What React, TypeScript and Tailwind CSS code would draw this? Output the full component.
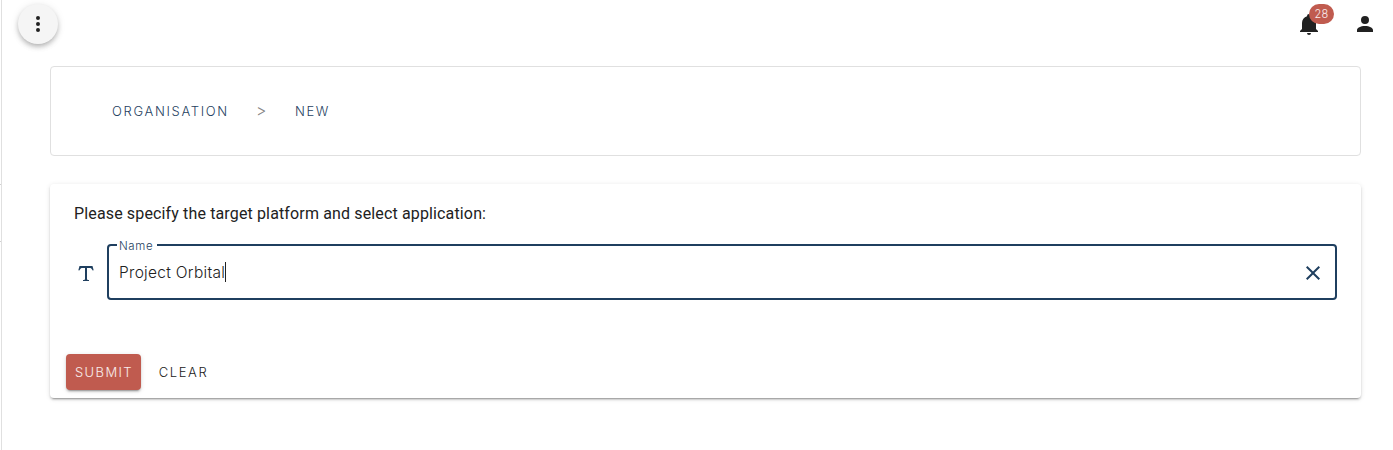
import React from "react";

const icons = {
  dots: "M12,16A2,2 0 0,1 14,18A2,2 0 0,1 12,20A2,2 0 0,1 10,18A2,2 0 0,1 12,16M12,10A2,2 0 0,1 14,12A2,2 0 0,1 12,14A2,2 0 0,1 10,12A2,2 0 0,1 12,10M12,4A2,2 0 0,1 14,6A2,2 0 0,1 12,8A2,2 0 0,1 10,6A2,2 0 0,1 12,4Z",
  bell: "M21,19V20H3V19L5,17V11C5,7.9 7.03,5.17 10,4.29C10,4.19 10,4.1 10,4A2,2 0 0,1 12,2A2,2 0 0,1 14,4C14,4.1 14,4.19 14,4.29C16.97,5.17 19,7.9 19,11V17L21,19M14,21A2,2 0 0,1 12,23A2,2 0 0,1 10,21",
  account: "M12,4A4,4 0 0,1 16,8A4,4 0 0,1 12,12A4,4 0 0,1 8,8A4,4 0 0,1 12,4M12,14C16.42,14 20,15.79 20,18V20H4V18C4,15.79 7.58,14 12,14Z",
  text: "M18.5,4L19.66,8.35L18.7,8.61C18.25,7.74 17.79,6.87 17.26,6.43C16.73,6 16.11,6 15.5,6H13V16.5C13,17 13,17.5 13.33,17.75C13.67,18 14.33,18 15,18V19H9V18C9.67,18 10.33,18 10.67,17.75C11,17.5 11,17 11,16.5V6H8.5C7.89,6 7.27,6 6.74,6.43C6.21,6.87 5.75,7.74 5.3,8.61L4.34,8.35L5.5,4H18.5Z",
  close: "M19,6.41L17.59,5L12,10.59L6.41,5L5,6.41L10.59,12L5,17.59L6.41,19L12,13.41L17.59,19L19,17.59L13.41,12L19,6.41Z",
};

function Icon({ name, className = "" }: { name: keyof typeof icons; className?: string }) {
  return (
    <svg viewBox="0 0 24 24" className={`size-6 shrink-0 fill-current ${className}`} aria-hidden="true">
      <path d={icons[name]} />
    </svg>
  );
}

export default function App() {
  return (
    <div className="flex h-[450px] w-full overflow-hidden bg-white font-['Inter',sans-serif] font-light text-[#212121]">
      <aside className="flex w-0.5 shrink-0 flex-col border-r border-[#e0e0e0] pt-[184px]">
        <div className="h-px bg-[#d0d0d0]" />
        <div className="mt-14 h-px bg-[#d0d0d0]" />
      </aside>
      <div className="flex min-w-0 flex-1 flex-col">
        <header className="flex h-[66px] items-start pl-4 pr-4">
          <button className="mt-1 flex size-10 items-center justify-center rounded-full bg-[#f5f5f5] shadow-[0_3px_5px_-1px_rgba(0,0,0,0.2),0_3px_6px_0_rgba(0,0,0,0.1),0_1px_10px_0_rgba(0,0,0,0.08)]" aria-label="Menu">
            <Icon name="dots" />
          </button>
          <div className="ml-auto mt-3 flex gap-8">
            <div className="relative size-6">
              <Icon name="bell" />
              <span className="absolute left-3 -top-2 flex h-5 w-[25px] items-center justify-center rounded-[10px] bg-[#c05b4f] text-[11px] leading-none tracking-[0.2px] text-white/90">28</span>
            </div>
            <Icon name="account" />
          </div>
        </header>
        <main className="flex flex-col gap-7 pl-12 pr-8">
          <nav className="flex h-[90px] items-center rounded border border-[#e0e0e0] pl-[61px] text-[13px] text-[#1f3f5f]">
            <span className="w-[144px] pt-0.5 tracking-[1.67px]">ORGANISATION</span>
            <span className="w-[38px] pb-0.5 text-base text-[#858585]">&gt;</span>
            <span className="pl-px pt-0.5 tracking-[1.6px]">NEW</span>
          </nav>
          <section className="flex h-[214px] flex-col rounded bg-white shadow-[0_3px_1px_-2px_rgba(0,0,0,0.2),0_2px_2px_0_rgba(0,0,0,0.14),0_1px_5px_0_rgba(0,0,0,0.12)]">
            <p className="mt-[18px] pl-6 font-['Roboto',sans-serif] text-base font-normal leading-6 tracking-[0.14px]">Please specify the target platform and select application:</p>
            <div className="mt-[18px] flex h-14 items-center gap-[9px] pl-6 pr-6">
              <Icon name="text" className="mt-1 text-[#1f3f5f]" />
              <div className="relative flex h-full flex-1 items-center rounded border-2 border-[#1f3f5f] pl-2.5 pr-2.5">
                <label className="absolute -top-1.5 left-2 w-10 bg-white pl-0.5 text-[11.5px] leading-3 tracking-[0.6px] text-[#1f3f5f]">Name</label>
                <span className="pt-px text-[15.5px] tracking-[0.29px]">Project Orbital</span>
                <span className="h-5 w-px bg-[#212121]" />
                <Icon name="close" className="ml-auto mt-0.5 text-[#1f3f5f]" />
              </div>
            </div>
            <div className="mt-[54px] flex gap-2 pl-4 text-[13px]">
              <button className="h-9 w-[75px] rounded bg-[#c05b4f] pl-px pt-0.5 tracking-[1.4px] text-white/90 shadow-[0_3px_1px_-2px_rgba(0,0,0,0.2),0_2px_2px_0_rgba(0,0,0,0.14),0_1px_5px_0_rgba(0,0,0,0.12)]">SUBMIT</button>
              <button className="h-9 w-[69px] pt-0.5 tracking-[1.6px]">CLEAR</button>
            </div>
          </section>
        </main>
      </div>
    </div>
  );
}
